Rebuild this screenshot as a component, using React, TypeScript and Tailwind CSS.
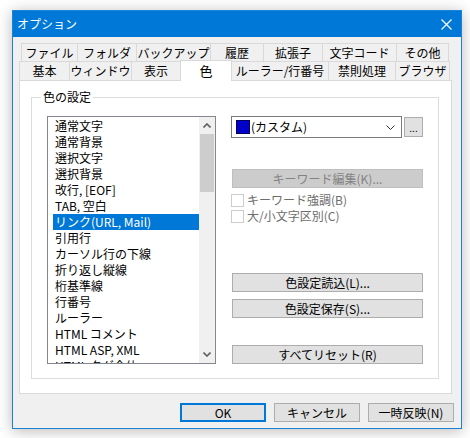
import React from 'react';

const topTabs = [
  { title: 'ファイル', w: 'w-[57px]' },
  { title: 'フォルダ', w: 'w-[59px]' },
  { title: 'バックアップ', w: 'w-[74px]' },
  { title: '履歴', w: 'w-[53px]' },
  { title: '拡張子', w: 'w-[59px]' },
  { title: '文字コード', w: 'w-[74px]' },
  { title: 'その他', w: 'w-[52px]' },
];

const bottomTabs = [
  { title: '基本', w: 'w-[51px]', active: false },
  { title: 'ウィンドウ', w: 'w-[62px]', active: false },
  { title: '表示', w: 'w-[49px]', active: false },
  { title: '色', w: 'w-[52px]', active: true },
  { title: 'ルーラー/行番号', w: 'w-[97px]', active: false },
  { title: '禁則処理', w: 'w-[67px]', active: false },
  { title: 'ブラウザ', w: 'w-[54px]', active: false },
];

const colorItems = [
  '通常文字',
  '通常背景',
  '選択文字',
  '選択背景',
  '改行, [EOF]',
  'TAB, 空白',
  'リンク(URL, Mail)',
  '引用行',
  'カーソル行の下線',
  '折り返し縦線',
  '桁基準線',
  '行番号',
  'ルーラー',
  'HTML コメント',
  'HTML ASP, XML',
  'HTML タグ全体',
];

const Button: React.FC<{ label: string; className?: string }> = ({ label, className }) => (
  <div
    className={`flex h-[19px] items-center justify-center border border-[#adadad] bg-[#e1e1e1] text-[12px] leading-none text-black ${className ?? ''}`}
  >
    {label}
  </div>
);

const Chevron: React.FC<{ up?: boolean }> = ({ up }) => (
  <svg width="8" height="5" viewBox="0 0 8 5" className="block">
    <polyline
      points={up ? '0.5,4.5 4,1 7.5,4.5' : '0.5,0.5 4,4 7.5,0.5'}
      fill="none"
      stroke="#606060"
      strokeWidth="1.6"
    />
  </svg>
);

const CheckRow: React.FC<{ label: string }> = ({ label }) => (
  <div className="flex h-[16px] items-center gap-[3px]">
    <div className="size-[13px] border border-[#cccccc] bg-white" />
    <span className="text-[12px] leading-none text-[#6d6d6d]">{label}</span>
  </div>
);

export default function App() {
  return (
    <div className="min-h-[438px] w-[470px] bg-white pl-[12px] pt-[10px] font-['Noto_Sans_CJK_JP',sans-serif] text-[12px] text-black">
      <div className="flex h-[419px] w-[450px] flex-col border border-[#1883d7] bg-[#f0f0f0] shadow-[0_2px_14px_rgba(0,0,0,0.28)]">
        {/* title bar */}
        <div className="flex h-[26px] shrink-0 items-center justify-between bg-[#0078d7] pl-[4px]">
          <span className="text-[12px] leading-none text-white">オプション</span>
          <div className="flex h-full w-[30px] items-center justify-center">
            <svg width="11" height="11" viewBox="0 0 11 11">
              <path d="M0.5 0.5 L10.5 10.5 M10.5 0.5 L0.5 10.5" stroke="#fff" strokeWidth="1.2" />
            </svg>
          </div>
        </div>

        <div className="flex flex-col px-[6px] pt-[6px]">
          {/* tabs */}
          <div className="flex h-[18px] pl-[2px]">
            {topTabs.map((tab, i) => (
              <div
                key={tab.title}
                className={`flex h-[18px] ${tab.w} items-center justify-center border-t border-r border-[#d9d9d9] text-[12px] leading-none ${i === 0 ? 'border-l' : ''}`}
              >
                {tab.title}
              </div>
            ))}
          </div>
          <div className="flex h-[19px] items-start">
            {bottomTabs.map((tab, i) =>
              tab.active ? (
                <div
                  key={tab.title}
                  className={`relative z-10 -mt-px -ml-px flex h-[21px] ${tab.w} items-start justify-center border-t border-r border-l border-[#d9d9d9] bg-white pt-[3px] text-[13px] leading-none`}
                >
                  {tab.title}
                </div>
              ) : (
                <div
                  key={tab.title}
                  className={`flex h-[19px] ${tab.w} items-center justify-center border-t border-r border-[#d9d9d9] text-[12px] leading-none ${i === 0 ? 'border-l' : ''}`}
                >
                  {tab.title}
                </div>
              ),
            )}
          </div>

          {/* panel */}
          <div className="h-[314px] w-[433px] border border-[#d9d9d9] bg-white pl-[11px] pt-[16px]">
            <div className="relative h-[282px] w-[408px] border border-[#dcdcdc] pl-[15px] pt-[18px]">
              <span className="absolute -top-[8px] left-[9px] bg-white px-[2px] text-[12px] leading-[14px]">
                色の設定
              </span>

              <div className="flex">
                {/* listbox */}
                <div className="flex h-[248px] w-[169px] border border-[#828790] bg-white">
                  <div className="flex-1 overflow-hidden pl-[5px] pt-[1px]">
                    {colorItems.map((item, i) => (
                      <div
                        key={item}
                        className={`h-[16px] whitespace-nowrap pl-[2px] text-[12px] leading-[16px] ${i === 6 ? 'bg-[#0078d7] text-white' : 'text-black'}`}
                      >
                        {item}
                      </div>
                    ))}
                  </div>
                  <div className="flex w-[16px] flex-col bg-[#f0f0f0]">
                    <div className="flex h-[17px] items-center justify-center">
                      <Chevron up />
                    </div>
                    <div className="mx-px h-[58px] bg-[#cdcdcd]" />
                    <div className="flex-1" />
                    <div className="flex h-[17px] items-center justify-center">
                      <Chevron />
                    </div>
                  </div>
                </div>

                {/* right side */}
                <div className="ml-[15px] flex flex-col">
                  <div className="flex items-start">
                    <div className="flex h-[22px] w-[171px] items-center border border-[#7a7a7a] bg-white pl-[4px] pr-[6px]">
                      <div className="h-[14px] w-[14px] border border-[#000060] bg-[#0000c8]" />
                      <span className="ml-[1px] flex-1 text-[12px] leading-none">(カスタム)</span>
                      <svg width="9" height="5" viewBox="0 0 9 5">
                        <polyline points="0.5,0.5 4.5,4.5 8.5,0.5" fill="none" stroke="#333" strokeWidth="1" />
                      </svg>
                    </div>
                    <div className="ml-[2px] mt-px flex h-[20px] w-[19px] items-start justify-center border border-[#adadad] bg-[#e1e1e1] pt-[5px] text-[10px] leading-none">
                      ...
                    </div>
                  </div>

                  <div className="ml-px mt-[31px] flex h-[19px] w-[191px] items-center justify-center border border-[#bfbfbf] bg-[#cccccc] text-[12px] leading-none text-[#838383]">
                    キーワード編集(K)...
                  </div>
                  <div className="mt-[4px] flex flex-col">
                    <CheckRow label="キーワード強調(B)" />
                    <CheckRow label="大/小文字区別(C)" />
                  </div>

                  <Button label="色設定読込(L)..." className="ml-px mt-[49px] w-[191px]" />
                  <Button label="色設定保存(S)..." className="ml-px mt-[7px] w-[191px]" />
                  <Button label="すべてリセット(R)" className="ml-px mt-[27px] w-[191px]" />
                </div>
              </div>
            </div>
          </div>

          {/* dialog buttons */}
          <div className="mr-px mt-[9px] flex justify-end gap-[8px]">
            <div className="flex h-[19px] w-[86px] items-center justify-center border-2 border-[#0078d7] bg-[#e1e1e1] text-[12px] leading-none">
              OK
            </div>
            <Button label="キャンセル" className="w-[86px]" />
            <Button label="一時反映(N)" className="w-[86px]" />
          </div>
        </div>
      </div>
    </div>
  );
}
